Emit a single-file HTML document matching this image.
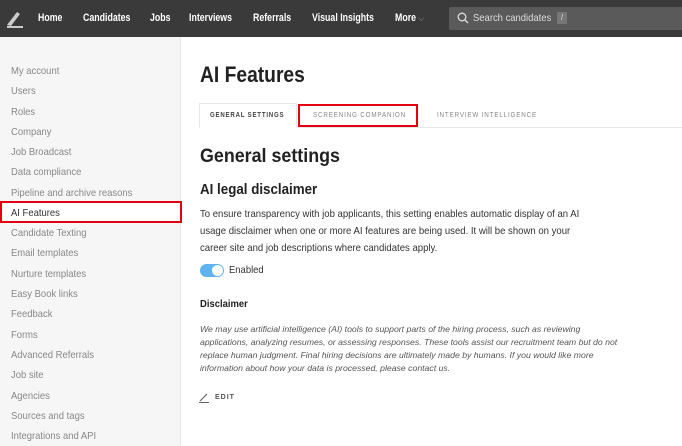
<!DOCTYPE html>
<html><head><meta charset="utf-8"><style>
*{margin:0;padding:0;box-sizing:border-box}
body{width:682px;height:446px;overflow:hidden;font-family:"Liberation Sans",sans-serif;background:#fff;position:relative;color:#222}
.nav{position:absolute;left:0;top:0;width:682px;height:37px;background:#3a3a3a}
.nav span{position:absolute;top:12px;color:#fff;font-weight:bold;font-size:11px;transform:scaleX(.8);transform-origin:0 0;white-space:nowrap}
.search{position:absolute;left:449px;top:7px;width:240px;height:23px;background:#5a5a5a;border-radius:2px}
.side{position:absolute;left:0;top:37px;width:181px;height:409px;background:#f6f6f6;border-right:1px solid #e6e6e6}
.side div{position:absolute;left:11px;font-size:10.5px;color:#888;transform:scaleX(.9);transform-origin:0 0;white-space:nowrap}
.abs{position:absolute}
.s{transform-origin:0 0;white-space:nowrap}
</style></head><body>
<div class="nav">
<svg class="abs" style="left:5px;top:9px" width="20" height="20" viewBox="0 0 20 20"><path d="M2 16 L12 3 L15 5 L6 17 Z" fill="#ccc"/><path d="M2 18 H18" stroke="#ccc" stroke-width="2"/></svg>
<span style="left:38px">Home</span><span style="left:83px">Candidates</span><span style="left:150px">Jobs</span><span style="left:189px">Interviews</span><span style="left:253px">Referrals</span><span style="left:312px">Visual Insights</span><span style="left:395px">More <span style="position:static;font-weight:normal;color:#aaa;font-size:9px">⌵</span></span>
<div class="search"><svg class="abs" style="left:8px;top:5px" width="12" height="12" viewBox="0 0 12 12"><circle cx="5" cy="5" r="3.8" stroke="#ddd" stroke-width="1.3" fill="none"/><path d="M8 8 L11 11" stroke="#ddd" stroke-width="1.3"/></svg><span style="left:24px;top:5px;font-weight:normal;color:#ddd;font-size:10.5px;transform:scaleX(.9)">Search candidates</span><span style="left:108px;top:5px;width:10px;height:12px;background:#777;color:#ddd;font-weight:normal;font-size:8px;text-align:center;line-height:12px;transform:none">/</span></div>
</div>
<div class="side">
<div style="top:28px">My account</div><div style="top:48px">Users</div><div style="top:69px">Roles</div><div style="top:89px">Company</div><div style="top:109px">Job Broadcast</div><div style="top:129px">Data compliance</div><div style="top:150px">Pipeline and archive reasons</div>
<div style="left:0;top:164px;width:182px;height:22px;background:#fff;border:2px solid #e00010;transform:none"></div>
<div style="top:170px;color:#333">AI Features</div>
<div style="top:190px">Candidate Texting</div><div style="top:210px">Email templates</div><div style="top:231px">Nurture templates</div><div style="top:251px">Easy Book links</div><div style="top:271px">Feedback</div><div style="top:292px">Forms</div><div style="top:312px">Advanced Referrals</div><div style="top:332px">Job site</div><div style="top:353px">Agencies</div><div style="top:373px">Sources and tags</div><div style="top:393px">Integrations and API</div>
</div>
<div class="abs s" style="left:200px;top:62px;font-size:22px;font-weight:bold;transform:scaleX(.875)">AI Features</div>
<div class="abs" style="left:199px;top:127px;width:483px;border-top:1px solid #e6e6e6"></div>
<div class="abs" style="left:199px;top:103px;width:98px;height:25px;border:1px solid #e6e6e6;border-bottom:1px solid #fff;background:#fff"></div>
<div class="abs" style="left:298px;top:104px;width:120px;height:23px;border:2px solid #e00010"></div>
<div class="abs s" style="left:210px;top:112px;font-size:7px;letter-spacing:.9px;font-weight:bold;color:#444;transform:scaleX(.87)">GENERAL SETTINGS</div>
<div class="abs s" style="left:313px;top:112px;font-size:7px;letter-spacing:.9px;color:#888;transform:scaleX(.9)">SCREENING COMPANION</div>
<div class="abs s" style="left:437px;top:112px;font-size:7px;letter-spacing:.9px;color:#888;transform:scaleX(.9)">INTERVIEW INTELLIGENCE</div>
<div class="abs s" style="left:200px;top:146px;font-size:19px;font-weight:bold;transform:scaleX(.94)">General settings</div>
<div class="abs s" style="left:200px;top:181px;font-size:15px;font-weight:bold;transform:scaleX(.89)">AI legal disclaimer</div>
<div class="abs" style="left:200px;top:206px;width:438px;font-size:10.5px;line-height:17px;color:#333;transform:scaleX(.91);transform-origin:0 0">To ensure transparency with job applicants, this setting enables automatic display of an AI usage disclaimer when one or more AI features are being used. It will be shown on your career site and job descriptions where candidates apply.</div>
<div class="abs" style="left:200px;top:264px;width:24px;height:13px;border-radius:7px;background:#5fb4ef"></div>
<div class="abs" style="left:212px;top:265px;width:11px;height:11px;border-radius:50%;background:#fff"></div>
<div class="abs s" style="left:229px;top:264px;font-size:10.5px;color:#333;transform:scaleX(.9)">Enabled</div>
<div class="abs s" style="left:200px;top:298px;font-size:10.5px;font-weight:bold;transform:scaleX(.9)">Disclaimer</div>
<div class="abs" style="left:200px;top:323px;width:420px;font-size:8.7px;line-height:13px;font-style:italic;color:#555">We may use artificial intelligence (AI) tools to support parts of the hiring process, such as reviewing applications, analyzing resumes, or assessing responses. These tools assist our recruitment team but do not replace human judgment. Final hiring decisions are ultimately made by humans. If you would like more information about how your data is processed, please contact us.</div>
<svg class="abs" style="left:199px;top:392px" width="11" height="11" viewBox="0 0 11 11"><path d="M1 9 L8 2" stroke="#666" stroke-width="1.2"/><path d="M0 10.5 H10" stroke="#666"/></svg>
<div class="abs" style="left:215px;top:394px;font-size:7px;font-weight:bold;letter-spacing:1px;color:#555">EDIT</div>
</body></html>
